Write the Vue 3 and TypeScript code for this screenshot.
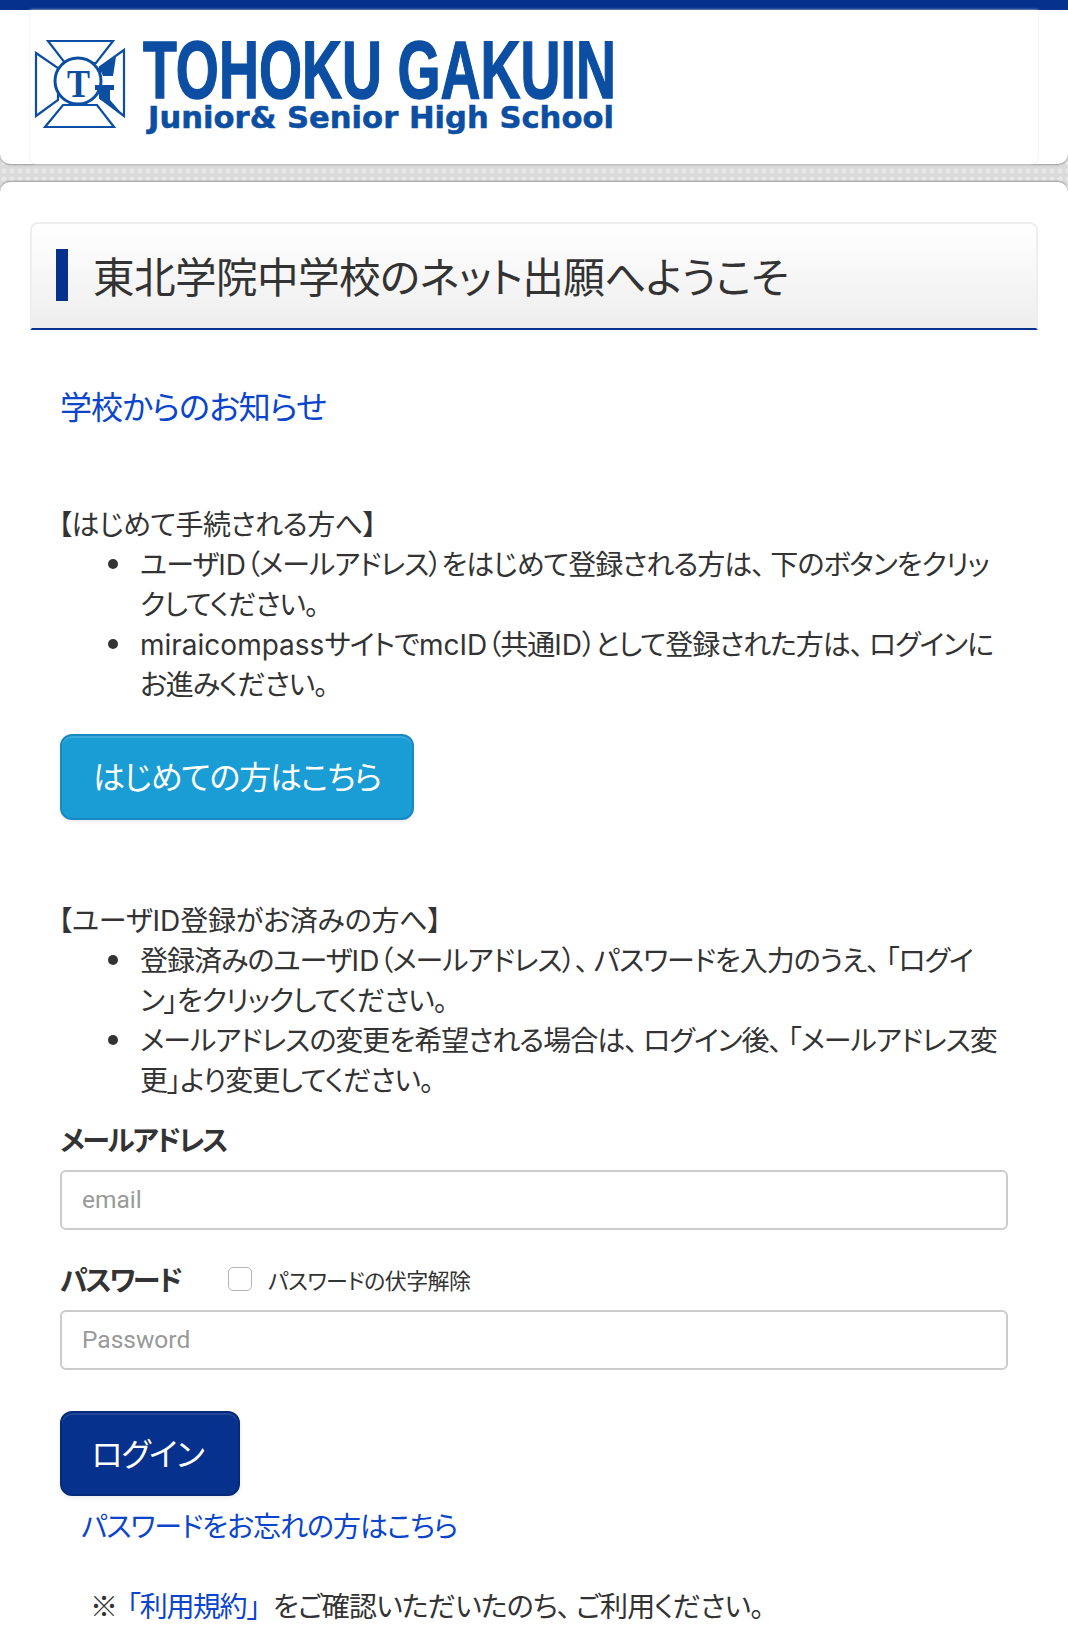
<script setup lang="ts">
</script>

<template>
  <div class="page">
    <header class="site-header">
      <div class="logo-wrap">
        <svg class="logo" viewBox="30 30 600 110" width="600" height="110" aria-label="TOHOKU GAKUIN">
          <g fill="none" stroke="#0b4ea2" stroke-width="2.2">
            <path d="M48 41H113L96 63H65Z" />
            <path d="M45 127H114L97 105H63Z" />
            <path d="M36 53L58 68V100L36 116Z" />
            <path d="M124 50L100 67V98L124 116Z" />
            <circle cx="78" cy="81" r="23" stroke-width="3" fill="#fff" />
          </g>
          <path d="M99 67L116 57L113 76H103Z" fill="#0b4ea2" />
          <path d="M95 85H114V90H110V100L124 116L103 100H100V90H95Z" fill="#0b4ea2" />
          <text class="mono" x="67" y="97" textLength="23" lengthAdjust="spacingAndGlyphs">T</text>
          <text class="word-top" x="143" y="98" textLength="473" lengthAdjust="spacingAndGlyphs">TOHOKU GAKUIN</text>
          <text class="word-sub" x="148" y="128" textLength="466" lengthAdjust="spacingAndGlyphs">Junior&amp; Senior High School</text>
        </svg>
      </div>
    </header>
    <div class="strip"></div>
    <main class="main">
      <h1 class="title">東北学院中学校のネット出願へようこそ</h1>

      <div class="content">
        <a class="notice-link">学校からのお知らせ</a>

        <p class="lead lead-first">【はじめて手続される方へ】</p>
        <ul class="steps">
          <li>ユーザ<span class="latin">ID</span>（メールアドレス）をはじめて登録される方は<span class="comma">、</span>下のボタンをクリッ<br />クしてください。</li>
          <li><span class="latin">miraicompass</span>サイトで<span class="latin">mcID</span>（共通<span class="latin">ID</span>）として登録された方は<span class="comma">、</span>ログインに<br />お進みください。</li>
        </ul>
        <button class="btn btn-first" type="button">はじめての方はこちら</button>

        <p class="lead lead-second">【ユーザ<span class="latin">ID</span>登録がお済みの方へ】</p>
        <ul class="steps">
          <li>登録済みのユーザ<span class="latin">ID</span>（メールアドレス）<span class="comma">、</span>パスワードを入力のうえ<span class="comma">、</span>「ログイ<br />ン」をクリックしてください。</li>
          <li>メールアドレスの変更を希望される場合は<span class="comma">、</span>ログイン後<span class="comma">、</span>「メールアドレス変<br />更」より変更してください。</li>
        </ul>

        <form class="login" @submit.prevent>
          <label class="field-label">メールアドレス</label>
          <input class="text-input" type="text" placeholder="email" />

          <div class="password-row">
            <label class="field-label">パスワード</label>
            <label class="unmask">
              <input class="unmask-box" type="checkbox" />
              <span>パスワードの伏字解除</span>
            </label>
          </div>
          <input class="text-input" type="password" placeholder="Password" />

          <button class="btn btn-login" type="submit">ログイン</button>
          <a class="forgot">パスワードをお忘れの方はこちら</a>
        </form>

        <p class="terms"><span class="terms-mark">※</span><a class="terms-link">「利用規約」</a>をご確認いただいたのち<span class="comma">、</span>ご利用ください。</p>
      </div>
    </main>
  </div>
</template>

<style>
html,
body {
  margin: 0;
  background: #fff;
}
</style>

<style scoped>
.page {
  width: 1068px;
  height: 1648px;
  overflow: hidden;
  background: #fff;
  color: #333;
  font-family: "Noto Sans CJK JP", "Noto Sans", sans-serif;
  font-size: 28px;
  line-height: 40px;
  font-feature-settings: "palt";
}

.site-header {
  position: relative;
  z-index: 1;
  height: 154px;
  border-top: 10px solid #06318c;
  border-radius: 0 0 10px 10px;
  background: #fff;
  padding: 0 30px;
  box-shadow: 0 1px 2px #9a9a9a;
}

.logo-wrap {
  height: 154px;
  border-radius: 0 0 8px 8px;
  box-shadow: 0 0 3px #e4e4e4;
  box-sizing: border-box;
  padding-top: 20px;
}

.logo {
  display: block;
  overflow: visible;
}

.mono {
  fill: #0b4ea2;
  font-family: "Liberation Serif", serif;
  font-size: 40px;
  font-weight: 700;
}

.word-top {
  fill: #0b4ea2;
  stroke: #0b4ea2;
  stroke-width: 1.4px;
  font-family: "Liberation Sans", sans-serif;
  font-size: 81px;
  font-weight: 700;
}

.word-sub {
  fill: #0b4ea2;
  stroke: #0b4ea2;
  stroke-width: 0.5px;
  font-family: "DejaVu Sans", sans-serif;
  font-size: 30px;
  font-weight: 700;
}

.strip {
  height: 38px;
  margin: -10px 0;
  background-color: #dadada;
  background-image: radial-gradient(circle at 4px 4px, #e8e8e8 2px, transparent 3px);
  background-size: 8px 8px;
  background-position: 0 5px;
}

.main {
  position: relative;
  z-index: 1;
  min-height: 1600px;
  border-radius: 10px 10px 0 0;
  background: #fff;
  padding: 40px 30px 0;
  box-shadow: 0 -1px 2px #9a9a9a;
}

.title {
  position: relative;
  box-sizing: border-box;
  height: 108px;
  margin: 0;
  padding-left: 61px;
  border: 2px solid #eeeeee;
  border-bottom: 2px solid #06318c;
  border-radius: 8px 8px 0 0;
  background: linear-gradient(#ffffff, #eeeeee);
  font-size: 41.6px;
  font-weight: 400;
  letter-spacing: -0.6px;
  line-height: 102px;
  white-space: nowrap;
}

.title::before {
  content: "";
  position: absolute;
  left: 24px;
  top: 25px;
  width: 12px;
  height: 52px;
  background: #06318c;
}

.content {
  padding: 0 30px;
}

.notice-link {
  display: block;
  margin-top: 55px;
  color: #0a45cc;
  font-size: 32px;
  letter-spacing: -0.9px;
  line-height: 40px;
}

.lead {
  margin: 0;
  white-space: nowrap;
}

.lead-first {
  margin-top: 78px;
  margin-left: -2px;
  letter-spacing: -0.5px;
}

.lead-second {
  margin-top: 79px;
  margin-left: -2px;
  letter-spacing: -0.2px;
}

.steps {
  margin: 0;
  padding-left: 80px;
  list-style: none;
  letter-spacing: -1px;
  white-space: nowrap;
}

.steps li {
  position: relative;
}

.steps li::before {
  content: "";
  position: absolute;
  left: -32px;
  top: 16px;
  width: 10px;
  height: 10px;
  border-radius: 50%;
  background: #333;
}

.latin {
  font-family: Inter, "Noto Sans", sans-serif;
  letter-spacing: 0;
  line-height: 0;
}

.comma {
  margin-right: 6px;
}

.btn {
  display: block;
  box-sizing: border-box;
  padding: 0 0 4px;
  border-radius: 12px;
  color: #fff;
  font-family: inherit;
  font-feature-settings: inherit;
  font-size: 32px;
  letter-spacing: -1.2px;
}

.btn-first {
  width: 354px;
  height: 86px;
  margin-top: 31px;
  border: 2px solid #1a88c2;
  background: #1a9cd4;
  box-shadow: inset 0 2px 0 rgba(255, 255, 255, 0.15), 0 2px 4px rgba(0, 0, 0, 0.08);
}

.login {
  margin-top: 20px;
}

.field-label {
  display: block;
  font-weight: 700;
  letter-spacing: -2.3px;
  line-height: 40px;
}

.text-input {
  display: block;
  box-sizing: border-box;
  width: 948px;
  height: 60px;
  margin-top: 11px;
  padding: 0 20px 2px;
  border: 2px solid #cccccc;
  border-radius: 6px;
  background: #fff;
  color: #333;
  font-family: Roboto, "Noto Sans", sans-serif;
  font-size: 24.5px;
  outline: none;
}

.text-input::placeholder {
  color: #999;
  opacity: 1;
}

.password-row {
  display: flex;
  align-items: center;
  margin-top: 29px;
}

.password-row .field-label {
  width: 168px;
}

.unmask {
  display: flex;
  align-items: center;
  gap: 16px;
  font-size: 22px;
  letter-spacing: -0.6px;
  line-height: 40px;
}

.unmask-box {
  appearance: none;
  box-sizing: border-box;
  width: 24px;
  height: 24px;
  margin: 0;
  border: 1px solid #b5b5b5;
  border-radius: 5px;
  background: #fff;
}

.btn-login {
  width: 180px;
  height: 85px;
  margin-top: 41px;
  padding-right: 5px;
  border: 2px solid #052a78;
  background: #06318c;
  box-shadow: inset 0 2px 0 rgba(255, 255, 255, 0.1), 0 2px 4px rgba(0, 0, 0, 0.08);
}

.forgot {
  display: block;
  margin: 9px 0 0 21px;
  color: #0a45cc;
  letter-spacing: -1px;
  line-height: 40px;
}

.terms {
  margin: 40px 0 0 30px;
  letter-spacing: -0.8px;
  white-space: nowrap;
}

.terms-mark {
  letter-spacing: -4.8px;
}

.terms-link {
  color: #0a45cc;
  font-feature-settings: normal;
  letter-spacing: -1.4px;
}
</style>
